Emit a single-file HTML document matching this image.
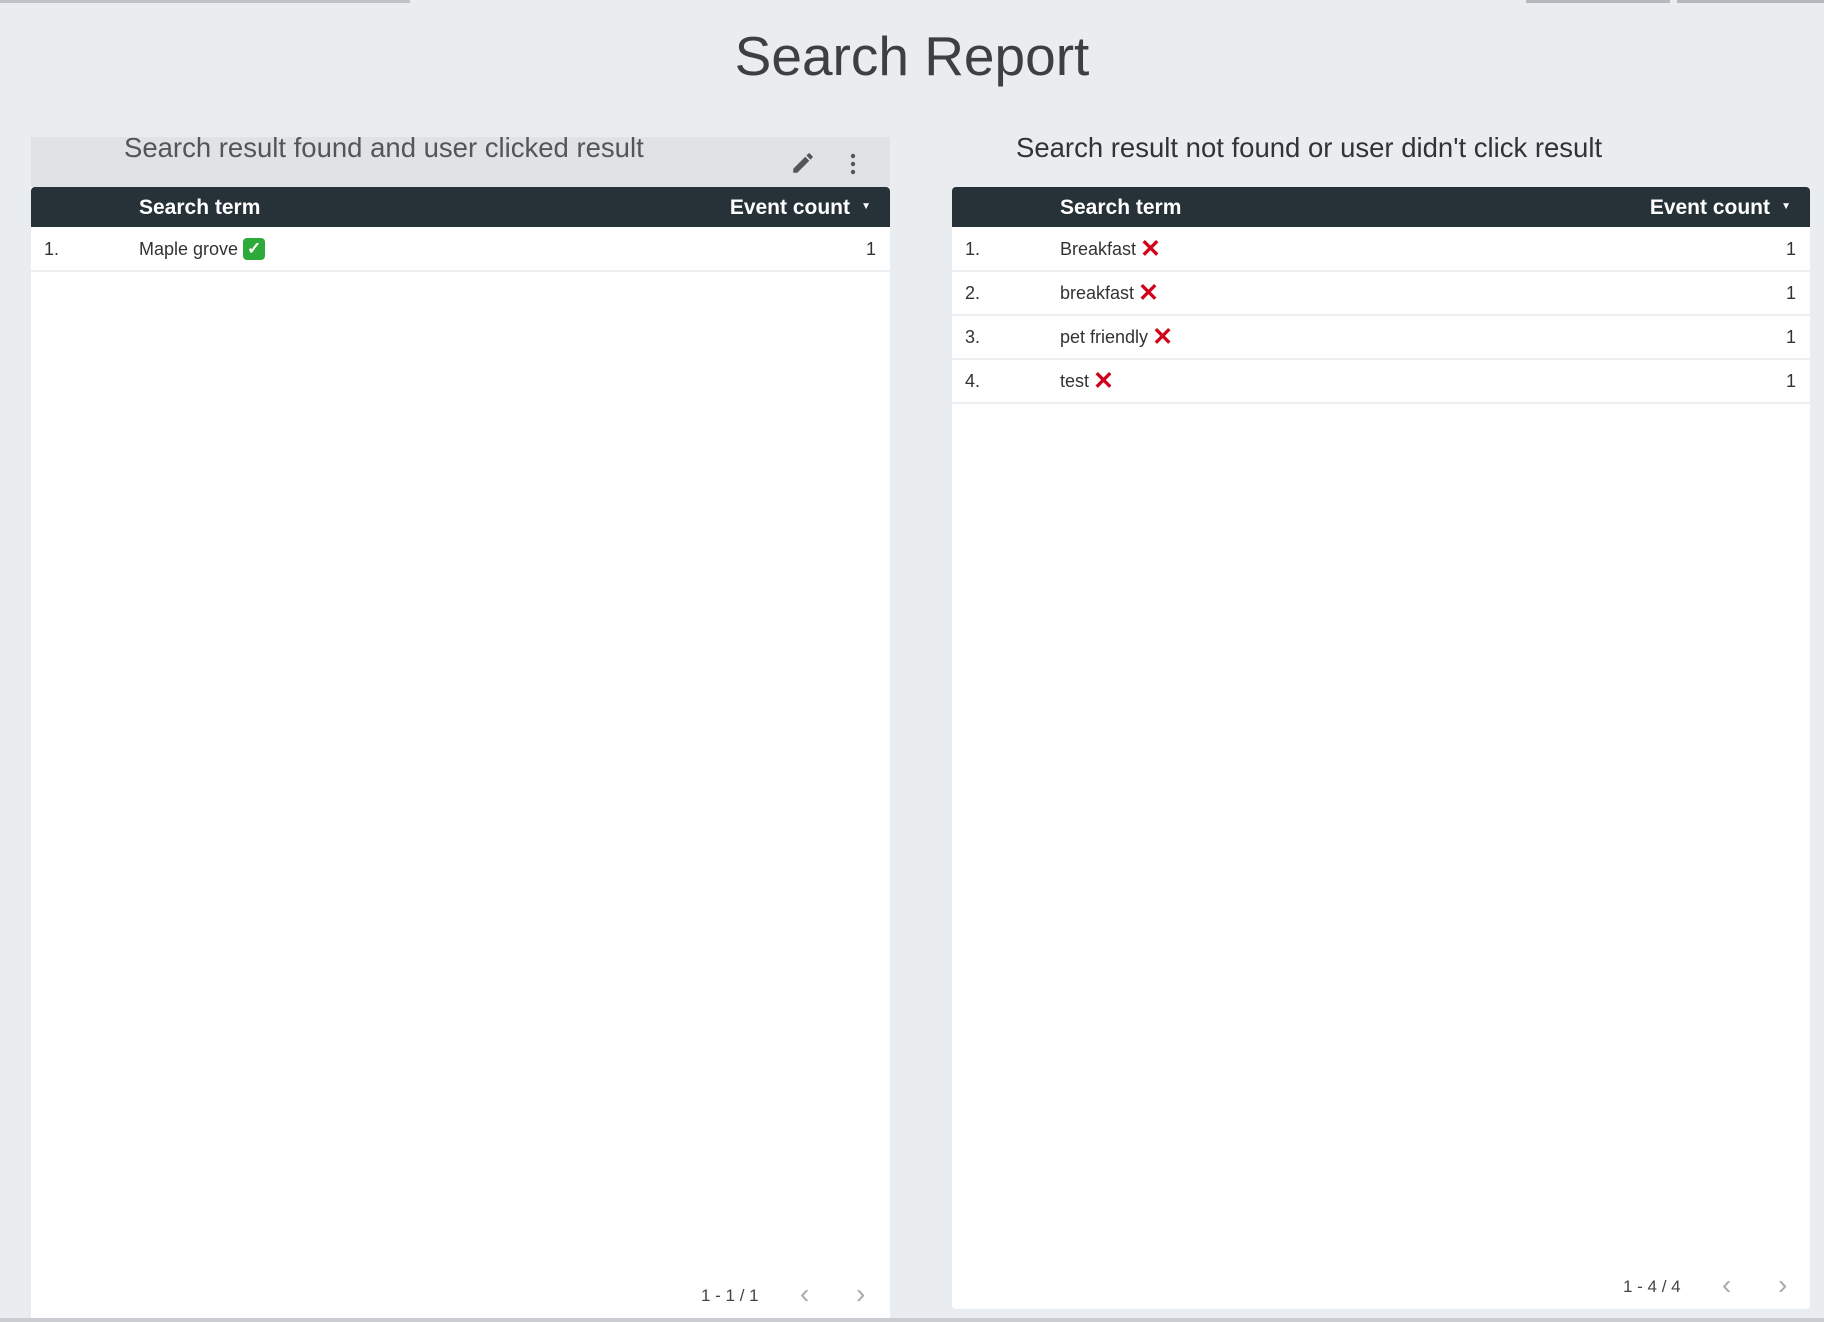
<!DOCTYPE html>
<html><head><style>
body{margin:0;width:1824px;height:1322px;background:#eaedf0;font-family:"Liberation Sans",sans-serif;position:relative;overflow:hidden}
.a{position:absolute}
.title{left:0;width:1824px;top:24px;text-align:center;font-size:55px;color:#3c4043}
.panel{background:#fff}
.hdr{background:#263238;color:#fff;font-weight:bold;font-size:21px;height:40px;border-radius:4px 4px 0 0}
.row{position:absolute;height:43px;border-bottom:2px solid #eceff1;font-size:18px;color:#333}
.row span{position:absolute;top:12px;line-height:20px;white-space:nowrap}
.pg{font-size:17px;color:#444}
.arr{font-size:28px;color:#aaa}
.x{display:inline-block;color:#d0021b;font-size:25px;font-weight:bold;line-height:20px;vertical-align:top;margin-left:-1px}
.ck{display:inline-block;width:22px;height:22px;background:#2eaa3a;color:#fff;border-radius:4px;font-size:17px;text-align:center;line-height:22px;vertical-align:top;margin-top:-1px}
</style></head><body>
<div class="a" style="left:0;top:0;width:410px;height:3px;background:#bfc3c7"></div>
<div class="a" style="left:1526px;top:0;width:144px;height:3px;background:#b5b9bd"></div>
<div class="a" style="left:1677px;top:0;width:147px;height:3px;background:#b5b9bd"></div>
<div class="a title">Search Report</div>

<!-- left -->
<div class="a panel" style="left:31px;top:137px;width:859px;height:1182px"></div>
<div class="a" style="left:31px;top:137px;width:859px;height:50px;background:#dfe3e5"></div>
<div class="a" style="left:124px;top:132px;font-size:27.5px;color:#555">Search result found and user clicked result</div>
<svg class="a" style="left:790px;top:150px" width="26" height="26" viewBox="0 0 24 24"><path d="M3 17.25V21h3.75L17.81 9.94l-3.75-3.75L3 17.25zM20.71 7.04a1 1 0 0 0 0-1.41l-2.34-2.34a1 1 0 0 0-1.41 0l-1.83 1.83 3.75 3.75 1.83-1.83z" fill="#555"/></svg>
<svg class="a" style="left:848px;top:152px" width="10" height="24"><circle cx="5" cy="4" r="2.2" fill="#555"/><circle cx="5" cy="12" r="2.2" fill="#555"/><circle cx="5" cy="20" r="2.2" fill="#555"/></svg>
<div class="a hdr" style="left:31px;top:187px;width:859px">
<span class="a" style="left:108px;top:9px">Search term</span>
<span class="a" style="right:40px;top:9px">Event count</span>
<span class="a" style="right:19px;top:14px;font-size:10px">▼</span></div>
<div class="row" style="left:31px;top:227px;width:859px"><span style="left:13px">1.</span><span style="left:108px">Maple grove <b class="ck">✓</b></span><span style="right:14px">1</span></div>
<div class="a pg" style="left:701px;top:1286px">1 - 1 / 1</div>
<div class="a arr" style="left:800px;top:1278px">‹</div>
<div class="a arr" style="left:856px;top:1278px">›</div>

<!-- right -->
<div class="a panel" style="left:952px;top:187px;width:858px;height:1122px;border-radius:4px"></div>
<div class="a" style="left:1016px;top:132px;font-size:27.5px;color:#333">Search result not found or user didn't click result</div>
<div class="a hdr" style="left:952px;top:187px;width:858px">
<span class="a" style="left:108px;top:9px">Search term</span>
<span class="a" style="right:40px;top:9px">Event count</span>
<span class="a" style="right:19px;top:14px;font-size:10px">▼</span></div>
<div class="row" style="left:952px;top:227px;width:858px"><span style="left:13px">1.</span><span style="left:108px">Breakfast <b class="x">✕</b></span><span style="right:14px">1</span></div>
<div class="row" style="left:952px;top:271px;width:858px"><span style="left:13px">2.</span><span style="left:108px">breakfast <b class="x">✕</b></span><span style="right:14px">1</span></div>
<div class="row" style="left:952px;top:315px;width:858px"><span style="left:13px">3.</span><span style="left:108px">pet friendly <b class="x">✕</b></span><span style="right:14px">1</span></div>
<div class="row" style="left:952px;top:359px;width:858px"><span style="left:13px">4.</span><span style="left:108px">test <b class="x">✕</b></span><span style="right:14px">1</span></div>
<div class="a pg" style="left:1623px;top:1277px">1 - 4 / 4</div>
<div class="a arr" style="left:1722px;top:1269px">‹</div>
<div class="a arr" style="left:1778px;top:1269px">›</div>
<div class="a" style="left:0;top:1318px;width:1824px;height:4px;background:#c9ccd0"></div>
</body></html>
